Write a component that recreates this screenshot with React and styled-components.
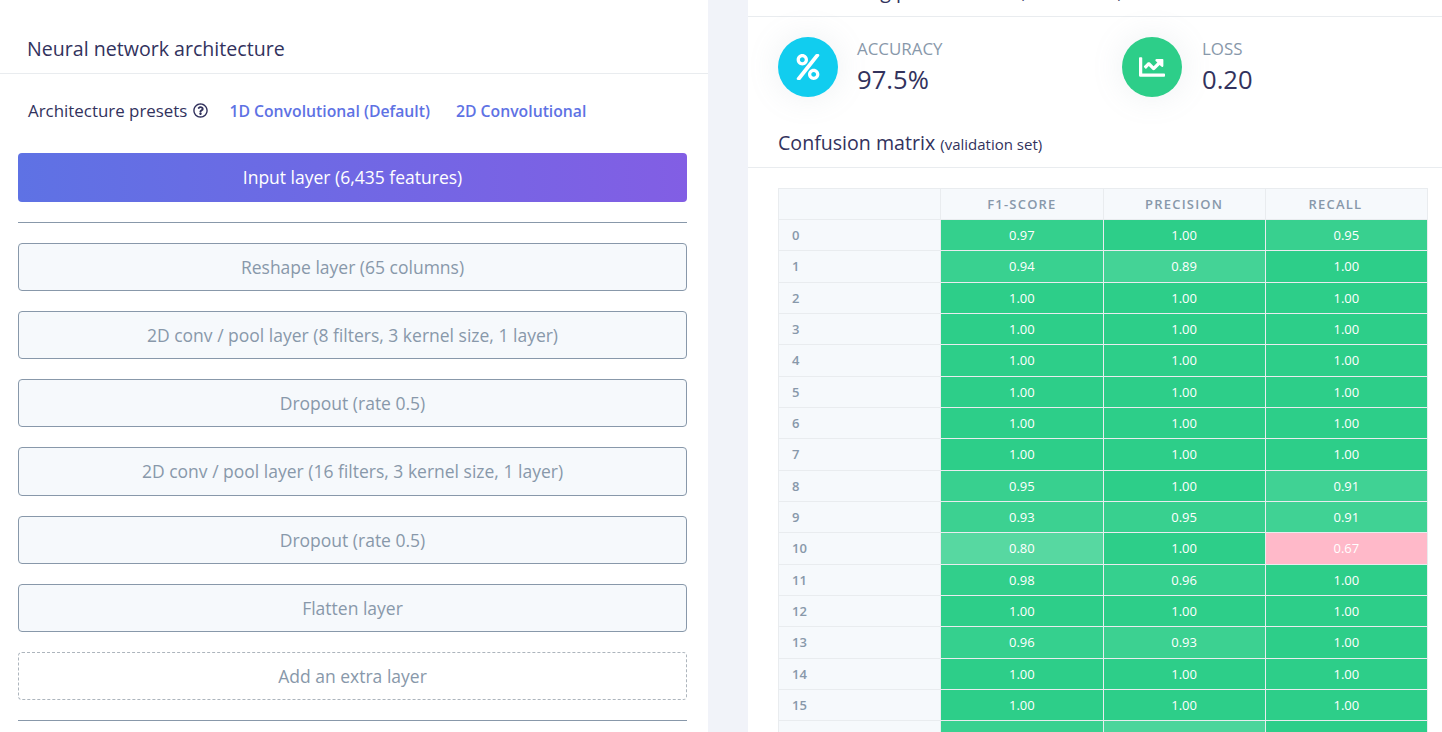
import styled, { createGlobalStyle } from 'styled-components';
import { FaPercent, FaChartLine, FaRegQuestionCircle } from 'react-icons/fa';

const GlobalStyle = createGlobalStyle`
  html, body {
    margin: 0;
    height: 732px;
    overflow: hidden;
    background: #f1f3f9;
    font-family: "Open Sans", "Noto Sans", sans-serif;
  }
`;

const Page = styled.div`
  display: flex;
  gap: 40px;
  height: 732px;
  overflow: hidden;
`;

const Card = styled.section`
  background: #fff;
  flex: ${(p) => p.$grow};
  min-width: 0;
  height: 732px;
  overflow: hidden;
`;

const CardHeader = styled.div`
  border-bottom: 1px solid #e9ecef;
  padding: ${(p) => p.$padding};
  height: ${(p) => p.$height};
  box-sizing: border-box;
  overflow: hidden;
`;

const Title = styled.h3`
  margin: ${(p) => p.$margin || 0};
  font-size: 19.6px;
  line-height: 24px;
  font-weight: 400;
  color: #32325d;
  white-space: nowrap;

  small {
    font-size: 15px;
  }
`;

const Presets = styled.div`
  display: flex;
  align-items: center;
  height: 22px;
  padding: 25px 0 0 28px;
  margin-bottom: 32px;
  font-size: 16.9px;
  color: #32325d;
`;

const Label = styled.span`
  display: flex;
  align-items: center;
  gap: 6px;
  margin-right: 21px;

  svg {
    font-size: 15px;
    color: #32325d;
  }
`;

const PresetLink = styled.a`
  margin: 2px 26px 0 0;
  color: #5e72e4;
  font-weight: 600;
  font-size: 15.75px;
`;

const Stack = styled.div`
  padding: 0 21px 0 18px;
  display: flex;
  flex-direction: column;
  gap: 20px;
`;

const InputLayer = styled.div`
  height: 48.6px;
  border-radius: 4px;
  background: linear-gradient(87deg, #5e72e4, #825ee4);
  color: #fff;
  font-size: 17.5px;
  display: flex;
  align-items: center;
  justify-content: center;
`;

const Rule = styled.hr`
  margin: 0;
  border: 0;
  border-top: 1px solid #8898aa;
`;

const Layer = styled.div`
  height: 48.25px;
  box-sizing: border-box;
  border-radius: 4px;
  border: 1px ${(p) => (p.$dashed ? 'dashed #adb5bd' : 'solid #8898aa')};
  background: ${(p) => (p.$dashed ? '#fff' : '#f6f9fc')};
  color: #8898aa;
  font-size: 17.5px;
  display: flex;
  align-items: center;
  justify-content: center;
`;

const Stats = styled.div`
  display: flex;
  padding: 20px 0 0 30px;
  height: 95px;
  box-sizing: border-box;
`;

const Stat = styled.div`
  flex: none;
  width: 344px;
  display: flex;
  gap: ${(p) => p.$gap};
`;

const Circle = styled.div`
  width: 60px;
  height: 60px;
  border-radius: 50%;
  background: ${(p) => p.$color};
  color: #fff;
  font-size: 26px;
  display: flex;
  align-items: center;
  justify-content: center;
  box-shadow: 0 0 32px rgba(136, 152, 170, 0.15);
`;

const StatLabel = styled.div`
  font-size: 16.9px;
  line-height: 24px;
  color: #8898aa;
`;

const StatValue = styled.div`
  font-size: 25.6px;
  line-height: 38px;
  color: #32325d;
`;

const TableWrap = styled.div`
  padding: 20px 13px 0 30px;
`;

const Table = styled.table`
  width: 650px;
  border-collapse: collapse;
  table-layout: fixed;
`;

const Th = styled.th`
  height: 30px;
  padding: 0;
  background: #f6f9fc;
  border: 1px solid #e9ecef;
  color: #8898aa;
  font-size: 13px;
  font-weight: 600;
  letter-spacing: 1.2px;
  text-transform: uppercase;

  &:last-child {
    padding-right: 22px;
  }
`;

const RowHead = styled.td`
  height: 30.33px;
  padding: 0 0 0 13px;
  background: #f6f9fc;
  border: 1px solid #e9ecef;
  color: #8898aa;
  font-size: 13px;
  font-weight: 600;
`;

const Cell = styled.td`
  height: 30.33px;
  padding: 0;
  text-align: center;
  border: 1px solid #e9ecef;
  border-top-color: #fff;
  border-left-color: #fff;
  color: #fff;
  font-size: 13px;
  font-weight: 500;
  background: ${(p) => (p.$value < 0.7 ? '#ffb9c9' : `rgba(45, 206, 137, ${p.$value})`)};
`;

const layers = [
  'Reshape layer (65 columns)',
  '2D conv / pool layer (8 filters, 3 kernel size, 1 layer)',
  'Dropout (rate 0.5)',
  '2D conv / pool layer (16 filters, 3 kernel size, 1 layer)',
  'Dropout (rate 0.5)',
  'Flatten layer',
];

const matrix = [
  ['0.97', '1.00', '0.95'],
  ['0.94', '0.89', '1.00'],
  ['1.00', '1.00', '1.00'],
  ['1.00', '1.00', '1.00'],
  ['1.00', '1.00', '1.00'],
  ['1.00', '1.00', '1.00'],
  ['1.00', '1.00', '1.00'],
  ['1.00', '1.00', '1.00'],
  ['0.95', '1.00', '0.91'],
  ['0.93', '0.95', '0.91'],
  ['0.80', '1.00', '0.67'],
  ['0.98', '0.96', '1.00'],
  ['1.00', '1.00', '1.00'],
  ['0.96', '0.93', '1.00'],
  ['1.00', '1.00', '1.00'],
  ['1.00', '1.00', '1.00'],
  ['0.94', '0.85', '1.00'],
];

export default function App() {
  return (
    <>
      <GlobalStyle />
      <Page>
        <Card $grow="0 0 708px">
          <CardHeader $height="74px" $padding="37px 0 0 27px">
            <Title>Neural network architecture</Title>
          </CardHeader>
          <Presets>
            <Label>
              Architecture presets <FaRegQuestionCircle />
            </Label>
            <PresetLink>1D Convolutional (Default)</PresetLink>
            <PresetLink>2D Convolutional</PresetLink>
          </Presets>
          <Stack>
            <InputLayer>Input layer (6,435 features)</InputLayer>
            <Rule />
            {layers.map((l, i) => (
              <Layer key={i}>{l}</Layer>
            ))}
            <Layer $dashed>Add an extra layer</Layer>
            <Rule />
          </Stack>
        </Card>
        <Card $grow="1">
          <CardHeader $height="17px" $padding="0 0 0 30px">
            <Title $margin="-21px 0 0">
              Last training performance <small>(validation set)</small>
            </Title>
          </CardHeader>
          <Stats>
            <Stat $gap="19px">
              <Circle $color="#11cdef">
                <FaPercent />
              </Circle>
              <div>
                <StatLabel>ACCURACY</StatLabel>
                <StatValue>97.5%</StatValue>
              </div>
            </Stat>
            <Stat $gap="20px">
              <Circle $color="#2dce89">
                <FaChartLine />
              </Circle>
              <div>
                <StatLabel>LOSS</StatLabel>
                <StatValue>0.20</StatValue>
              </div>
            </Stat>
          </Stats>
          <CardHeader $height="56px" $padding="19px 0 0 30px">
            <Title>
              Confusion matrix <small>(validation set)</small>
            </Title>
          </CardHeader>
          <TableWrap>
            <Table>
              <thead>
                <tr>
                  <Th />
                  <Th>F1-score</Th>
                  <Th>Precision</Th>
                  <Th>Recall</Th>
                </tr>
              </thead>
              <tbody>
                {matrix.map((row, i) => (
                  <tr key={i}>
                    <RowHead>{i}</RowHead>
                    {row.map((v, j) => (
                      <Cell key={j} $value={parseFloat(v)}>
                        {v}
                      </Cell>
                    ))}
                  </tr>
                ))}
              </tbody>
            </Table>
          </TableWrap>
        </Card>
      </Page>
    </>
  );
}
